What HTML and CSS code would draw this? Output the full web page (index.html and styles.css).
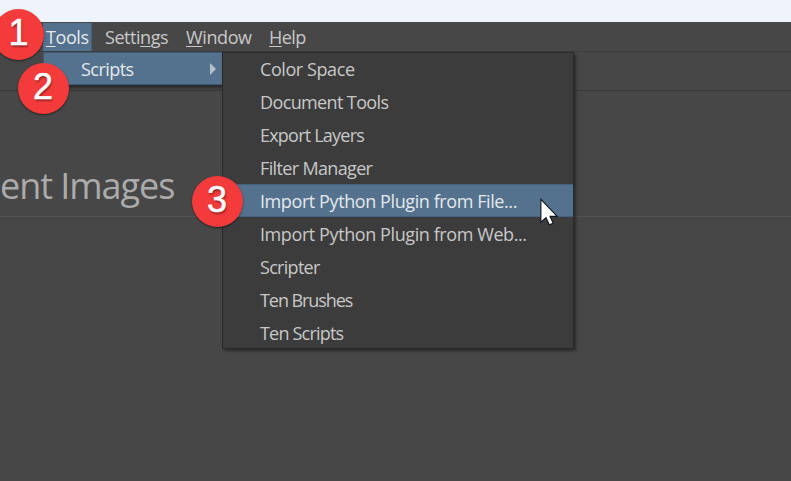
FILE: index.html
```
<!DOCTYPE html>
<html lang="en">
<head>
<meta charset="utf-8">
<title>Scripts menu</title>
<link rel="stylesheet" href="styles.css">
</head>
<body>
<div class="window">
  <header class="titlebar"></header>
  <nav class="menubar">
    <span class="menu tools active"><u>T</u>ools</span>
    <span class="menu settings">Setti<u>n</u>gs</span>
    <span class="menu windows"><u>W</u>indow</span>
    <span class="menu help"><u>H</u>elp</span>
  </nav>
  <div class="toolbar"></div>
  <main class="welcome"><h1>ent Images</h1></main>
</div>
<div class="dropdown"><span>Scripts</span><i class="arrow"></i></div>
<ul class="submenu">
  <li><span class="t1">Color Space</span></li>
  <li><span class="t2">Document Tools</span></li>
  <li><span class="t3">Export Layers</span></li>
  <li><span class="t4">Filter Manager</span></li>
  <li class="active"><span class="t5">Import Python Plugin from File...</span></li>
  <li><span class="t6">Import Python Plugin from Web...</span></li>
  <li><span class="t7">Scripter</span></li>
  <li><span class="t8">Ten Brushes</span></li>
  <li><span class="t9">Ten Scripts</span></li>
</ul>
<div class="badge one">1</div>
<div class="badge two">2</div>
<div class="badge three">3</div>
<svg class="cursor" width="20" height="29" viewBox="0 0 20 29"><path d="M.9 1.3V24.2L6 19.6L9.3 26.8L13.2 25.2L10 18.4H17.2Z" fill="#fff" stroke="#10141e" stroke-width="1.1"/></svg>
</body>
</html>
```
FILE: styles.css
```
* { box-sizing: border-box; }
body {
  margin: 0;
  width: 791px;
  height: 481px;
  overflow: hidden;
  position: relative;
  background: #474747;
  color: #c8c8c8;
  font: 18px/33px "Open Sans", "Noto Sans", sans-serif;
  letter-spacing: -0.55px;
  white-space: nowrap;
}
.window { display: flex; flex-direction: column; height: 481px; }
.titlebar { height: 22px; background: #eff4fc; }
.menubar {
  display: flex;
  height: 30px;
  padding-left: 43px;
  border-bottom: 1px solid #3d3d3d;
  line-height: 30px;
}
.menu { height: 29px; padding-left: 2px; }
.menu u { text-decoration-thickness: 1px; text-underline-offset: 2px; }
.tools { width: 49px; margin-top: 1px; height: 28px; line-height: 28px; padding-left: 3px; letter-spacing: -0.4px; border: solid #436280; border-width: 0 1px 0 0; }
.settings { margin-left: 11px; width: 81px; letter-spacing: -0.45px; }
.windows { width: 83px; letter-spacing: -0.4px; }
.active { background: #54728d; color: #e4e8ec; }
.toolbar { height: 39px; border-bottom: 1px solid #393939; }
.welcome { height: 126px; border-bottom: 1px solid #525252; padding-top: 70px; }
h1 {
  margin: 0;
  color: #ababab;
  font-weight: 400;
  font-size: 36px;
  line-height: 50px;
  letter-spacing: -1.05px;
}
.dropdown {
  position: absolute;
  left: 43px;
  top: 52px;
  width: 180px;
  height: 33px;
  display: flex;
  align-items: center;
  justify-content: space-between;
  padding: 1px 6px 0 37px;
  background: #54728d;
  border: 1px solid #3c5a76;
  color: #e4e8ec;
  box-shadow: 3px 3px 3px #2b2b2b;
}
.arrow { border: 6px solid transparent; border-left-color: #b5c0ca; border-right: 0; }
.submenu {
  position: absolute;
  left: 222px;
  top: 52px;
  width: 352px;
  height: 297px;
  margin: 0;
  padding: 0;
  list-style: none;
  background: #3c3c3c;
  border: 1px solid #292929;
  box-shadow: 2px 2px 3px #2b2b2b;
}
.submenu li { height: 33px; padding-left: 37px; }
.submenu .active { margin: -1px 0 1px; border: 1px solid #436280; border-width: 1px 0; line-height: 33px; }
.t1 { letter-spacing: -0.42px; }
.t2 { letter-spacing: -0.62px; }
.t3 { letter-spacing: -0.78px; }
.t4 { letter-spacing: -0.65px; }
.t5, .t6 { letter-spacing: -0.41px; }
.t7 { letter-spacing: -0.7px; }
.t8, .t9 { letter-spacing: -0.8px; }
.t8 { letter-spacing: -1.07px; }
.badge {
  position: absolute;
  width: 51px;
  height: 51px;
  border-radius: 50%;
  background: #f43b3c;
  color: #fff;
  font: 36px/48px "Liberation Sans", sans-serif;
  -webkit-text-stroke: 0.5px #fff;
  text-align: center;
  letter-spacing: 0;
  text-shadow: 1px 2px 2px #0006;
  box-shadow: 0 1px 2px #0008;
}
.one { left: -7px; top: 9px; }
.two { left: 17.5px; top: 62.5px; }
.three { left: 191.5px; top: 175.5px; }
.cursor { position: absolute; left: 540px; top: 198px; }
```
